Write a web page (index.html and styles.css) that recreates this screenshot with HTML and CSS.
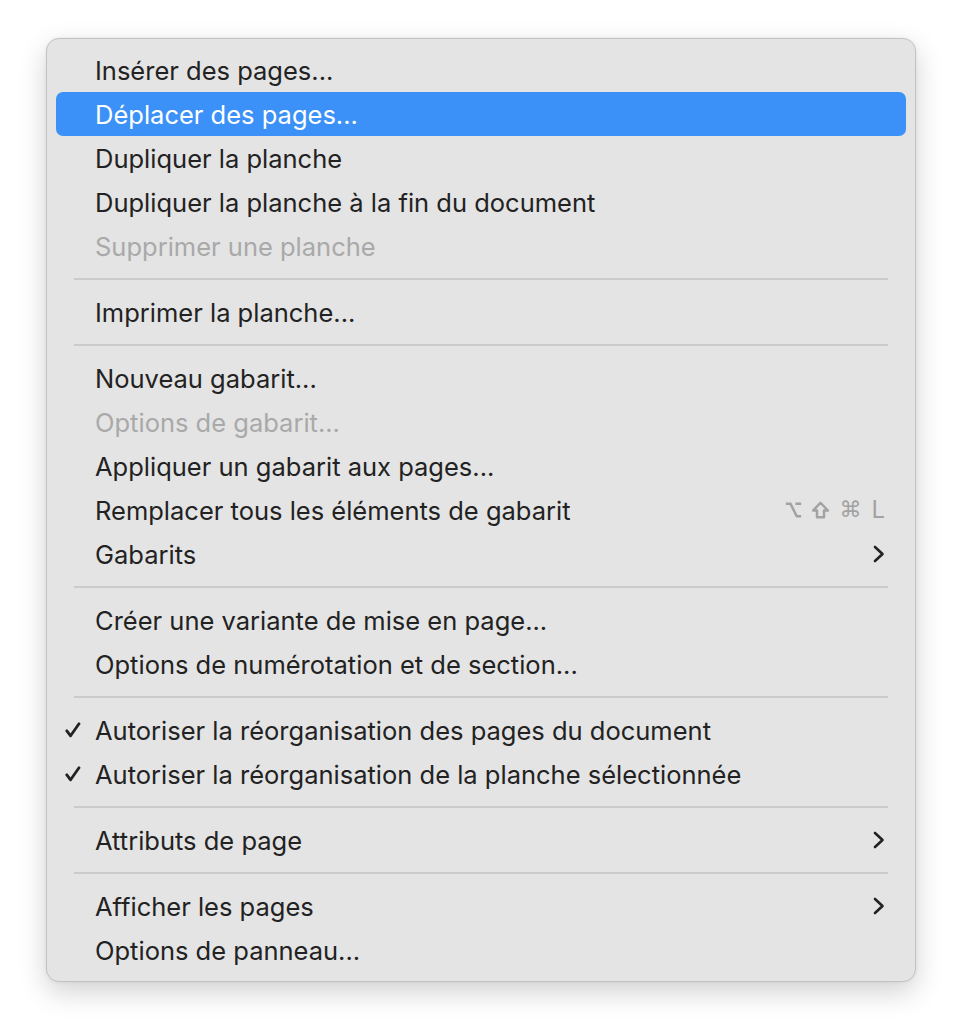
FILE: index.html
```html
<!DOCTYPE html>
<html lang="fr">
<head>
<meta charset="utf-8">
<link rel="stylesheet" href="styles.css">
</head>
<body>
<div class="menu">
  <div class="item">Insérer des pages...</div>
  <div class="item active">Déplacer des pages...</div>
  <div class="item">Dupliquer la planche</div>
  <div class="item">Dupliquer la planche à la fin du document</div>
  <div class="item disabled">Supprimer une planche</div>
  <div class="sep"></div>
  <div class="item">Imprimer la planche...</div>
  <div class="sep"></div>
  <div class="item">Nouveau gabarit...</div>
  <div class="item disabled">Options de gabarit...</div>
  <div class="item">Appliquer un gabarit aux pages...</div>
  <div class="item"><span class="label">Remplacer tous les éléments de gabarit</span><span class="shortcut"><svg class="sym" viewBox="0 0 16 16"><path d="M0.8 2.2 H5.2 L11 13.8 H15.2 M9.8 2.2 H15.2" /></svg><svg class="sym" viewBox="0 0 16 16"><path d="M8 1.2 L15 8.5 L11.3 8.5 L11.3 14.8 L4.7 14.8 L4.7 8.5 L1 8.5 Z" /></svg><span class="key">⌘</span><span class="key l">L</span></span></div>
  <div class="item"><span class="label">Gabarits</span><svg class="chev" viewBox="0 0 12 18"><path d="M2 2 L9.5 9 L2 16" /></svg></div>
  <div class="sep"></div>
  <div class="item">Créer une variante de mise en page...</div>
  <div class="item">Options de numérotation et de section...</div>
  <div class="sep"></div>
  <div class="item"><svg class="check" viewBox="0 0 16 16"><path d="M1.8 8.8 L5.6 13.8 L14 1.8" /></svg>Autoriser la réorganisation des pages du document</div>
  <div class="item"><svg class="check" viewBox="0 0 16 16"><path d="M1.8 8.8 L5.6 13.8 L14 1.8" /></svg>Autoriser la réorganisation de la planche sélectionnée</div>
  <div class="sep"></div>
  <div class="item"><span class="label">Attributs de page</span><svg class="chev" viewBox="0 0 12 18"><path d="M2 2 L9.5 9 L2 16" /></svg></div>
  <div class="sep"></div>
  <div class="item"><span class="label">Afficher les pages</span><svg class="chev" viewBox="0 0 12 18"><path d="M2 2 L9.5 9 L2 16" /></svg></div>
  <div class="item">Options de panneau...</div>
</div>
</body>
</html>
```
FILE: styles.css
```css
html, body {
  margin: 0;
  background: #ffffff;
}
body {
  box-sizing: border-box;
  min-height: 1036px;
  padding: 38px 0 0 46px;
  font-family: Inter, "Noto Sans", "Liberation Sans", sans-serif;
}
.menu {
  box-sizing: border-box;
  width: 870px;
  height: 944px;
  padding: 9px;
  background: #e4e4e4;
  border: 1px solid #c2c2c2;
  border-radius: 13px;
  box-shadow: 0 10px 28px rgba(0,0,0,0.18), 0 0 4px rgba(0,0,0,0.06);
}
.item {
  position: relative;
  height: 44px;
  display: flex;
  align-items: center;
  padding: 0 21px 0 39px;
  font-size: 25.5px;
  color: #222222;
  border-radius: 7px;
  white-space: nowrap;
}
.item.active {
  background: #3b91f7;
  color: #ffffff;
}
.item.disabled {
  color: #a9a9a9;
}
.label {
  flex: 1;
}
.sep {
  height: 22px;
  display: flex;
  align-items: center;
  padding: 0 18px;
}
.sep::before {
  content: "";
  flex: 1;
  height: 2px;
  background: #cbcbcb;
}
.shortcut {
  display: flex;
  align-items: center;
  gap: 10px;
  color: #a2a2a2;
}
.sym {
  flex-shrink: 0;
  width: 17px;
  height: 18px;
  fill: none;
  stroke: #a2a2a2;
  stroke-width: 2.3;
  stroke-linejoin: round;
}
.key {
  font-family: "DejaVu Sans", sans-serif;
  font-size: 22px;
  line-height: 1;
}
.key.l {
  font-family: Inter, sans-serif;
  font-size: 24px;
  font-weight: 400;
}
.chev {
  width: 12px;
  height: 18px;
  fill: none;
  stroke: #222222;
  stroke-width: 2.6;
  stroke-linecap: round;
  stroke-linejoin: round;
}
.check {
  position: absolute;
  left: 9px;
  top: 14px;
  width: 16px;
  height: 16px;
  fill: none;
  stroke: #222222;
  stroke-width: 2.8;
  stroke-linecap: round;
  stroke-linejoin: round;
}
```
